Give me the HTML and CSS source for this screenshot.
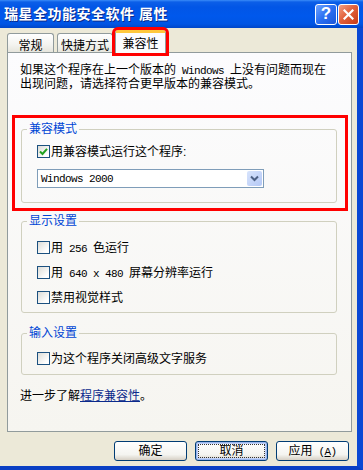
FILE: index.html
```html
<!DOCTYPE html>
<html lang="zh-CN">
<head>
  <meta charset="UTF-8" />
  <title>瑞星全功能安全软件 属性</title>
  <link rel="stylesheet" href="styles.css">
</head>
<body>

<div class="window">
  <div class="titlebar">
    <span class="title">瑞星全功能安全软件 属性</span>
    <div class="caption-buttons">
      <span class="cap-btn help">?</span>
      <span class="cap-btn close">
        <svg width="11" height="11" viewBox="0 0 11 11"><path d="M1.5 1.5 L9.5 9.5 M9.5 1.5 L1.5 9.5" stroke="#fff" stroke-width="2.2" stroke-linecap="square"/></svg>
      </span>
    </div>
  </div>

  <div class="frame">
    <div class="tabs">
      <div class="tab first">常规</div>
      <div class="tab second">快捷方式</div>
      <div class="tab active">兼容性</div>
    </div>

    <div class="page">
      <p class="intro">如果这个程序在上一个版本的<span class="en"> Windows </span>上没有问题而现在<br>出现问题，请选择符合更早版本的兼容模式。</p>

      <div class="highlight">
        <fieldset class="group compat">
          <legend>兼容模式</legend>
          <div class="options">
            <label class="row"><span class="check checked"><svg width="9" height="9" viewBox="0 0 9 9"><path d="M1 4.5 L3.5 7 L8 1.8" fill="none" stroke="#21a121" stroke-width="2"/></svg></span><span>用兼容模式运行这个程序:</span></label>
            <div class="select">
              <span class="en">Windows 2000</span>
              <span class="arrow"><svg width="9" height="7" viewBox="0 0 9 7"><path d="M1 1.5 L4.5 5 L8 1.5" fill="none" stroke="#4d6185" stroke-width="2"/></svg></span>
            </div>
          </div>
        </fieldset>
      </div>

      <fieldset class="group display">
        <legend>显示设置</legend>
        <div class="options">
          <label class="row"><span class="check"></span><span>用<span class="en"> 256 </span>色运行</span></label>
          <label class="row"><span class="check"></span><span>用<span class="en"> 640 x 480 </span>屏幕分辨率运行</span></label>
          <label class="row"><span class="check"></span><span>禁用视觉样式</span></label>
        </div>
      </fieldset>

      <fieldset class="group input">
        <legend>输入设置</legend>
        <div class="options">
          <label class="row"><span class="check"></span><span>为这个程序关闭高级文字服务</span></label>
        </div>
      </fieldset>

      <p class="more">进一步了解<a href="#">程序兼容性</a>。</p>
    </div>

    <div class="buttons">
      <button type="button">确定</button>
      <button type="button" class="focused">取消</button>
      <button type="button">应用<span class="en"> (<u>A</u>)</span></button>
    </div>
  </div>
</div>

</body>
</html>
```

FILE: styles.css
```css
* { box-sizing: border-box; }

body {
  margin: 0;
  font-family: "Liberation Sans", "Noto Sans CJK SC", sans-serif;
  font-size: 12px;
  line-height: 14px;
  color: #000;
}

.en {
  font-family: "Liberation Mono", monospace;
  font-size: 11px;
  letter-spacing: -0.6px;
  line-height: 10px;
  white-space: pre;
}

.window {
  width: 363px;
  height: 470px;
  display: flex;
  flex-direction: column;
  overflow: hidden;
}

/* Title bar */
.titlebar {
  height: 28px;
  flex: none;
  display: flex;
  align-items: center;
  justify-content: space-between;
  padding: 0 4px 0 4px;
  background: linear-gradient(to bottom, #3a8cf8 0, #0c5fe8 2px, #0256e6 7px, #0058ec 16px, #0055e4 24px, #0046c8 28px);
}

.title {
  color: #fff;
  font-weight: bold;
  font-size: 14px;
  letter-spacing: 0.5px;
  text-shadow: 1px 1px 0 #0a2a8a;
}

.caption-buttons {
  display: flex;
  gap: 1px;
}

.cap-btn {
  width: 22px;
  height: 21px;
  border: 1px solid #fff;
  border-radius: 3px;
  display: flex;
  align-items: center;
  justify-content: center;
}

.help {
  background: linear-gradient(135deg, #6fa3ff, #2a6ff2 50%, #1c56d8);
  color: #fff;
  font-family: "Liberation Sans", sans-serif;
  font-weight: bold;
  font-size: 17px;
}

.close {
  width: 21px;
  background: linear-gradient(135deg, #f4a084, #e2623c 45%, #c63a16);
}

/* Frame */
.frame {
  flex: 1;
  display: flex;
  flex-direction: column;
  background: #ece9d8;
  border-right: 6px solid #0a48d4;
  border-bottom: 4px solid #0a3fc4;
  padding: 5px 5px 0 7px;
}

.tabs {
  display: flex;
  align-items: flex-end;
  height: 19px;
}

.tab {
  height: 19px;
  padding-top: 5px;
  text-align: center;
  border: 1px solid #919b9c;
  border-bottom: none;
  border-radius: 3px 3px 0 0;
  background: linear-gradient(to bottom, #fff, #f3f3ef 60%, #e6e5dd);
}

.tab.first { width: 47px; }

.tab.second { width: 56px; margin-left: 3px; }

.tab.active {
  width: 51px;
  height: 23px;
  margin-left: 2px;
  margin-bottom: -1px;
  padding-top: 4px;
  position: relative;
  z-index: 1;
  background: #fcfcfe;
  border-top: 3px solid #ffc83c;
  outline: 3px solid #f00;
  outline-offset: 0;
}

.page {
  border: 1px solid #919b9c;
  background: linear-gradient(to bottom, #fcfcfe, #f6f5f0);
  padding: 10px 0 28px;
}

.intro {
  margin: 0 0 0 12px;
  white-space: nowrap;
}

.highlight {
  margin: 24px 3px 0 4px;
  border: 3px solid #f00;
  padding: 4px 8px 5px 6px;
}

.group {
  margin: 0;
  padding: 0 5px;
  border: 1px solid #d0d0bf;
  border-radius: 3px;
  min-width: 0;
}

.group legend {
  padding: 0 2px;
  color: #0046d5;
}

.display, .input {
  margin: 3px 14px 0 13px;
}

.input { margin-top: 13px; }

.options {
  margin-left: 10px;
  display: flex;
  flex-direction: column;
  align-items: flex-start;
}

.compat .options { padding: 9px 0 14px; }

.display .options { padding: 13px 0 8px; gap: 12px; }

.input .options { padding: 12px 0 9px; }

.row {
  display: flex;
  align-items: center;
  height: 13px;
  white-space: nowrap;
}

.check {
  width: 13px;
  height: 13px;
  margin-right: 1px;
  border: 1px solid #1c5180;
  background: linear-gradient(135deg, #dcdcd7, #fff 80%);
  display: flex;
  align-items: center;
  justify-content: center;
}

.select {
  margin-top: 11px;
  width: 227px;
  height: 19px;
  border: 1px solid #7f9db9;
  background: #fff;
  display: flex;
  align-items: center;
  justify-content: space-between;
  padding: 0 1px 0 3px;
}

.arrow {
  width: 15px;
  height: 15px;
  border-radius: 2px;
  background: linear-gradient(135deg, #d8e4fc, #b4c8f6);
  display: flex;
  align-items: center;
  justify-content: center;
}

.more {
  margin: 14px 0 0 12px;
}

.more a {
  color: #0b2a8c;
}

/* Buttons */
.buttons {
  display: flex;
  justify-content: flex-end;
  gap: 8px;
  margin-top: 9px;
  padding-right: 3px;
}

.buttons button {
  width: 73px;
  height: 20px;
  padding: 0;
  font: inherit;
  line-height: 14px;
  border: 1px solid #003c74;
  border-radius: 3px;
  background: linear-gradient(to bottom, #fff, #f4f4f0 70%, #d6d0c5);
  color: #000;
}

.buttons button.focused {
  box-shadow: inset 0 0 0 1px #98b4ec, inset 0 0 0 2px #c2d3f8;
  outline: 1px dotted #333;
  outline-offset: -4px;
}
```
